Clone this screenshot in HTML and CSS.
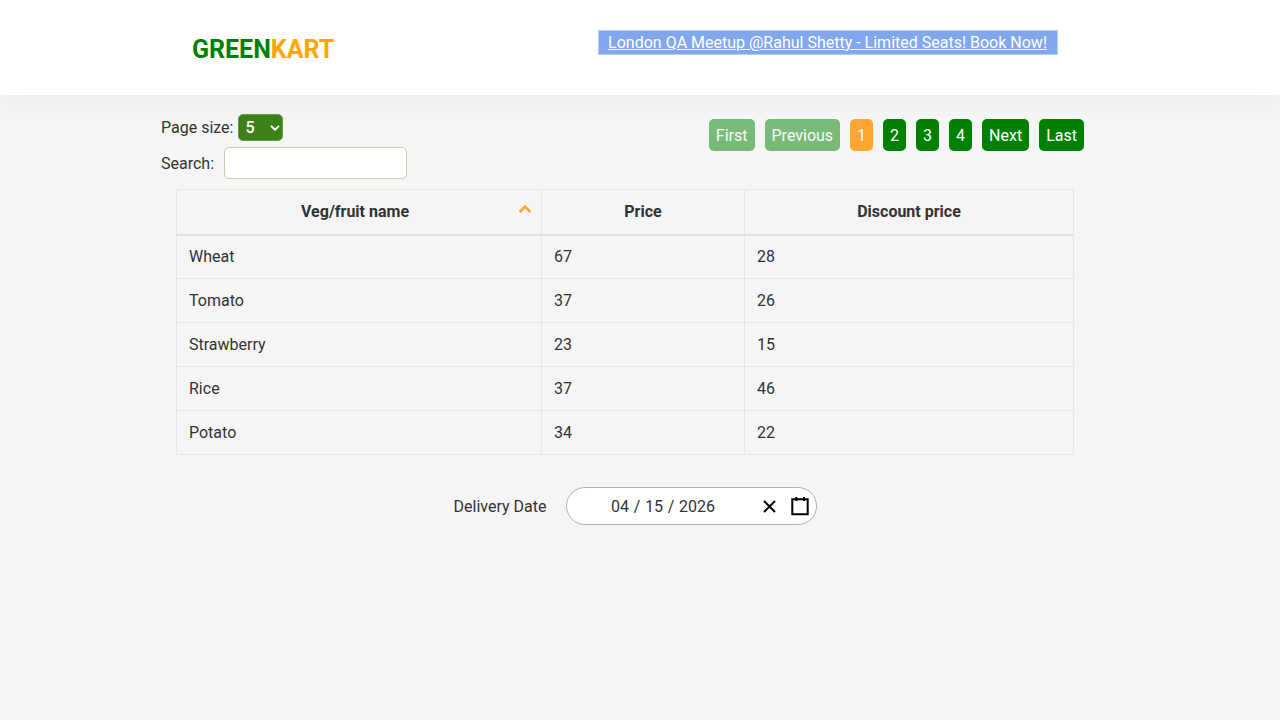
FILE: index.html
```html
<!DOCTYPE html>
<html lang="en">
<head>
<meta charset="utf-8">
<title>GreenKart</title>
<link rel="stylesheet" href="styles.css">
</head>
<body>
<header class="header">
  <div class="brand">GREEN<span class="brand-accent">KART</span></div>
  <a class="promo" href="#">London QA Meetup @Rahul Shetty - Limited Seats! Book Now!</a>
</header>
<main class="main">
  <div class="toolbar">
    <div class="filters">
      <div class="page-size">
        <label for="page-size">Page size:</label>
        <div class="select" id="page-size"><span>5</span>
          <svg class="chevron" width="10" height="6" viewBox="0 0 10 6"><path d="M1 0.9 5 4.7 9 0.9"/></svg>
        </div>
      </div>
      <div class="search">
        <label class="search-label" for="search">Search:</label>
        <input class="search-input" id="search" type="text">
      </div>
    </div>
    <nav class="pagination">
      <a class="page disabled">First</a>
      <a class="page disabled">Previous</a>
      <a class="page active">1</a>
      <a class="page">2</a>
      <a class="page">3</a>
      <a class="page">4</a>
      <a class="page">Next</a>
      <a class="page">Last</a>
    </nav>
  </div>
  <table class="table">
    <colgroup><col class="col-name"><col class="col-price"><col class="col-discount"></colgroup>
    <thead>
      <tr>
        <th><div class="sortable"><span class="sort-label">Veg/fruit name</span><svg class="sort-icon" width="14" height="10" viewBox="0 0 14 10"><path d="M1.6 8 7 2.6 12.4 8"/></svg></div></th>
        <th>Price</th>
        <th>Discount price</th>
      </tr>
    </thead>
    <tbody>
      <tr><td>Wheat</td><td>67</td><td>28</td></tr>
      <tr><td>Tomato</td><td>37</td><td>26</td></tr>
      <tr><td>Strawberry</td><td>23</td><td>15</td></tr>
      <tr><td>Rice</td><td>37</td><td>46</td></tr>
      <tr><td>Potato</td><td>34</td><td>22</td></tr>
    </tbody>
  </table>
  <div class="delivery">
    <span class="delivery-label">Delivery Date</span>
    <div class="date-picker">
      <span class="date-value">04 / 15 / 2026</span>
      <svg class="clear-icon" width="19" height="19" viewBox="0 0 19 19"><path d="M4 4 15 15M15 4 4 15"/></svg>
      <svg class="calendar-icon" width="19" height="19" viewBox="0 0 19 19"><path d="M1.3 2.3h15.4v15h-15.4zM5.3 0v4M13 0v4"/></svg>
    </div>
  </div>
</main>
</body>
</html>
```
FILE: styles.css
```css
* { box-sizing: border-box; }
body {
  margin: 0;
  min-height: 720px;
  background: #f5f5f5;
  color: #333;
  font: 16px/24px Roboto, sans-serif;
}
.header {
  display: flex;
  align-items: flex-start;
  justify-content: space-between;
  height: 95px;
  padding: 30px 222px 0 192px;
  background: #fff;
  box-shadow: 0 5px 25px rgba(0, 0, 0, .045);
}
.brand {
  margin-top: 8px;
  color: green;
  font-size: 25px;
  font-weight: 700;
}
.brand-accent { color: orange; }
.promo {
  height: 25px;
  padding: 0 10px 0 9px;
  border: 1px solid #b5cdf6;
  background: #81a8ee;
  color: #fff;
}
.main { padding: 19px 196px 0 161px; }
.toolbar {
  display: flex;
  justify-content: space-between;
  height: 75px;
}
.page-size, .search { display: flex; }
.page-size { gap: 5px; line-height: 27px; }
.select {
  display: flex;
  align-items: center;
  justify-content: space-between;
  width: 45px;
  height: 27px;
  padding: 0 2px 0 6px;
  border: 1px solid #5f9d45;
  border-radius: 5px;
  background: #3d8219;
  color: #fff;
  font-weight: 500;
}
.chevron { fill: none; stroke: #fff; stroke-width: 1.8; }
.search {
  align-items: center;
  gap: 10px;
  margin-top: 6px;
}
.search-label { padding-top: 1px; }
.search-input {
  width: 183px;
  height: 32px;
  border: 1px solid #cbcbb8;
  border-radius: 5px;
  background: #fff;
  font: inherit;
}
.pagination {
  display: flex;
  gap: 10px;
  height: 32px;
  margin-top: 5px;
}
.page {
  padding: 0 7px;
  border-radius: 5px;
  background: green;
  color: #fff;
  line-height: 33px;
}
.disabled { opacity: .5; }
.active { background: #ffa530; }
.table {
  width: 898px;
  margin-left: 15px;
  border-collapse: collapse;
  table-layout: fixed;
}
.col-name { width: 365px; }
.col-price { width: 203px; }
.table th, .table td {
  height: 44px;
  padding: 0 12px;
  border: 1px solid #e4e7ea;
  text-align: left;
}
.table th {
  height: 45px;
  border-bottom: 2px solid #dee2e6;
  text-align: center;
}
.sortable { display: flex; align-items: center; }
.sort-label { flex: 1; padding-left: 3px; }
.sort-icon {
  margin-right: -3px;
  margin-bottom: 6px;
  fill: none;
  stroke: #ffa530;
  stroke-width: 2.5;
}
.delivery {
  display: flex;
  align-items: center;
  gap: 19.5px;
  margin: 32px 0 0 292.5px;
}
.delivery-label { padding-top: 1px; }
.date-picker {
  display: flex;
  align-items: center;
  width: 251px;
  height: 38px;
  padding-left: 44px;
  border: 1px solid #b3b3b3;
  border-radius: 19px;
  background: #fff;
}
.date-value {
  width: 149px;
  padding-top: 1px;
  white-space: pre;
  word-spacing: .75px;
}
.clear-icon, .calendar-icon { fill: none; stroke: #000; stroke-width: 2; }
.calendar-icon { margin-left: 12px; }
```
